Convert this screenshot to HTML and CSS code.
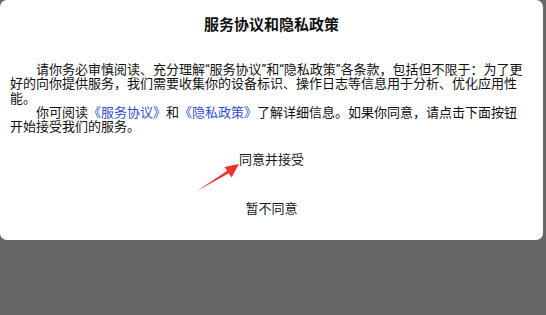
FILE: index.html
```html
<!DOCTYPE html>
<html lang="zh-CN">
<head>
<meta charset="utf-8">
<title>服务协议和隐私政策</title>
<link rel="stylesheet" href="styles.css">
</head>
<body>
<div class="dialog">
  <h1 class="title">服务协议和隐私政策</h1>
  <div class="content">
    <p class="para">请你务必审慎阅读、充分理解“服务协议”和“隐私政策”各条款，包括但不限于：为了更好的向你提供服务，我们需要收集你的设备标识、操作日志等信息用于分析、优化应用性能。</p>
    <p class="para">你可阅读<a class="link">《服务协议》</a>和<a class="link">《隐私政策》</a>了解详细信息。如果你同意，请点击下面按钮开始接受我们的服务。</p>
  </div>
  <div class="actions">
    <div class="btn">同意并接受</div>
    <div class="btn">暂不同意</div>
  </div>
  <svg class="arrow" width="56" height="40" viewBox="0 0 56 40">
    <polygon points="7,33 38.7,15.2 41.6,19.5 49,6 34.5,9 37.2,12.8" fill="#f2302b"/>
  </svg>
</div>
</body>
</html>
```
FILE: styles.css
```css
html, body {
  margin: 0;
  padding: 0;
  background: #666666;
  width: 546px;
  height: 315px;
  overflow: hidden;
}
body {
  font-family: Roboto, "Noto Sans CJK SC", sans-serif;
  color: #111;
}
.dialog {
  position: relative;
  width: 543px;
  height: 240px;
  background: #fff;
  border-radius: 7px;
  box-sizing: border-box;
  padding: 15px 18px 0 10px;
}
.title {
  margin: 0;
  font-size: 15px;
  line-height: 20px;
  font-weight: bold;
  text-align: center;
  padding-left: 8px;
}
.content {
  margin-top: 28px;
}
.para {
  margin: 0;
  font-size: 13px;
  line-height: 14.3px;
  text-indent: 2em;
}
.link {
  color: #2f50d0;
  text-decoration: none;
}
.actions {
  margin-top: 6px;
  display: flex;
  flex-direction: column;
  align-items: center;
  gap: 9px;
  padding-left: 8px;
}
.btn {
  height: 40px;
  line-height: 40px;
  font-size: 13px;
  color: #1a1a1a;
}
.arrow {
  position: absolute;
  left: 190px;
  top: 158px;
}
```
